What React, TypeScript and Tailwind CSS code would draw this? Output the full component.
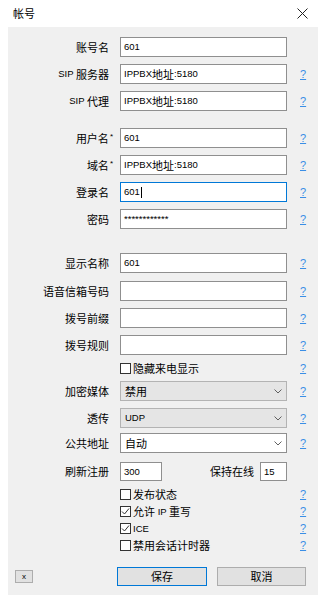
import React from "react";

const CJK = /[\u3000-\u9fff\uff00-\uffef]/;

function T({ s }: { s: string }) {
  const parts: { t: string; c: boolean }[] = [];
  for (const ch of s) {
    const c = CJK.test(ch);
    const last = parts[parts.length - 1];
    if (last && last.c === c) last.t += ch;
    else parts.push({ t: ch, c });
  }
  return (
    <span className="inline-flex items-center leading-none">
      {parts.map((p, i) => (
        <span
          key={i}
          className={
            p.c
              ? "whitespace-pre leading-none text-[11px] font-['Noto_Sans_CJK_SC',sans-serif]"
              : "whitespace-pre leading-none text-[9.5px] font-['Liberation_Sans',sans-serif]"
          }
        >
          {p.t}
        </span>
      ))}
    </span>
  );
}

function Help() {
  return (
    <span className="ml-[13px] text-[11px] leading-none text-[#3a8ee6] underline font-['Liberation_Sans',sans-serif]">
      ?
    </span>
  );
}

function Label({ s, star }: { s: string; star?: boolean }) {
  return (
    <div className="w-[101px] flex justify-end items-center text-[#000] leading-none">
      <T s={s} />
      {star && <span className="mr-[-4px] ml-[1px] self-start text-[8px] leading-none font-['Liberation_Sans',sans-serif]">*</span>}
    </div>
  );
}

function Row({
  label,
  star,
  value,
  help = true,
  focused,
  mt,
}: {
  label: string;
  star?: boolean;
  value?: string;
  help?: boolean;
  focused?: boolean;
  mt: string;
}) {
  return (
    <div className={`flex items-center h-[20px] ${mt}`}>
      <Label s={label} star={star} />
      <div
        className={`ml-[11px] w-[167px] h-[20px] bg-white border flex items-center px-[3px] leading-none ${
          focused ? "border-[#0078d7]" : "border-[#8f8f8f]"
        }`}
      >
        {value && <T s={value} />}
        {focused && <span className="ml-[1px] w-[1px] h-[11px] bg-black" />}
      </div>
      {help && <Help />}
    </div>
  );
}

function Chevron() {
  return (
    <svg width="8" height="5" viewBox="0 0 8 5" className="ml-auto mr-[4px]">
      <polyline points="0.5,0.5 4,4 7.5,0.5" fill="none" stroke="#606060" strokeWidth="1" />
    </svg>
  );
}

function SelectRow({ label, value, white, mt }: { label: string; value: string; white?: boolean; mt: string }) {
  return (
    <div className={`flex items-center h-[20px] ${mt}`}>
      <Label s={label} />
      <div
        className={`ml-[11px] w-[167px] h-[20px] border flex items-center pl-[4px] leading-none ${
          white ? "bg-white border-[#8f8f8f]" : "bg-[#e5e5e5] border-[#b3b3b3]"
        }`}
      >
        <T s={value} />
        <Chevron />
      </div>
      <Help />
    </div>
  );
}

function Box({ checked }: { checked?: boolean }) {
  return (
    <span className="w-[11px] h-[11px] border border-[#333] bg-white flex items-center justify-center shrink-0">
      {checked && (
        <svg width="9" height="9" viewBox="0 0 9 9">
          <polyline points="1,4.5 3.5,7 8,1.5" fill="none" stroke="#333" strokeWidth="1" />
        </svg>
      )}
    </span>
  );
}

function CheckRow({ label, checked, mt, h }: { label: string; checked?: boolean; mt: string; h: string }) {
  return (
    <div className={`flex items-center ${h} ${mt}`}>
      <div className="w-[101px]" />
      <div className="ml-[11px] w-[167px] flex items-center leading-none">
        <Box checked={checked} />
        <span className="ml-[2px] flex items-center">
          <T s={label} />
        </span>
      </div>
      <Help />
    </div>
  );
}

export default function App() {
  return (
    <div className="w-[325px] h-[600px] bg-white flex flex-col text-black overflow-hidden">
      <div className="h-[27px] flex items-center pl-[13px] pr-[17px] shrink-0">
        <T s="帐号" />
        <svg width="11" height="11" viewBox="0 0 11 11" className="ml-auto">
          <line x1="0.5" y1="0.5" x2="10.5" y2="10.5" stroke="#222" strokeWidth="1" />
          <line x1="10.5" y1="0.5" x2="0.5" y2="10.5" stroke="#222" strokeWidth="1" />
        </svg>
      </div>
      <div className="ml-[8px] w-[310px] h-[568px] bg-[#f0f0f0] flex flex-col">
        <Row label="账号名" value="601" help={false} mt="mt-[10px]" />
        <Row label="SIP 服务器" value="IPPBX地址:5180" mt="mt-[7px]" />
        <Row label="SIP 代理" value="IPPBX地址:5180" mt="mt-[7px]" />

        <Row label="用户名" star value="601" mt="mt-[17px]" />
        <Row label="域名" star value="IPPBX地址:5180" mt="mt-[7px]" />
        <Row label="登录名" value="601" focused mt="mt-[7px]" />
        <Row label="密码" value="************" mt="mt-[7px]" />

        <Row label="显示名称" value="601" mt="mt-[24px]" />
        <Row label="语音信箱号码" mt="mt-[8px]" />
        <Row label="拨号前缀" mt="mt-[7px]" />
        <Row label="拨号规则" mt="mt-[7px]" />

        <CheckRow label="隐藏来电显示" mt="mt-[6px]" h="h-[14px]" />

        <SelectRow label="加密媒体" value="禁用" mt="mt-[6px]" />
        <SelectRow label="透传" value="UDP" mt="mt-[7px]" />
        <SelectRow label="公共地址" value="自动" white mt="mt-[5px]" />

        <div className="flex items-center h-[19px] mt-[9px]">
          <Label s="刷新注册" />
          <div className="ml-[11px] w-[42px] h-[19px] bg-white border border-[#8f8f8f] flex items-center px-[3px] leading-none">
            <T s="300" />
          </div>
          <div className="ml-[48px] leading-none flex items-center">
            <T s="保持在线" />
          </div>
          <div className="ml-[6px] w-[27px] h-[19px] bg-white border border-[#8f8f8f] flex items-center px-[3px] leading-none">
            <T s="15" />
          </div>
        </div>

        <CheckRow label="发布状态" mt="mt-[5px]" h="h-[17px]" />
        <CheckRow label="允许 IP 重写" checked mt="mt-0" h="h-[17px]" />
        <CheckRow label="ICE" checked mt="mt-0" h="h-[17px]" />
        <CheckRow label="禁用会话计时器" mt="mt-0" h="h-[17px]" />

        <div className="flex items-center mt-[13px] h-[19px]">
          <div className="ml-[7px] w-[18px] h-[13px] bg-[#e1e1e1] border border-[#adadad] flex items-center justify-center leading-none">
            <span className="text-[8px] font-['Liberation_Sans',sans-serif]">x</span>
          </div>
          <div className="ml-[84px] w-[90px] h-[19px] bg-[#e1e1e1] border border-[#0078d7] flex items-center justify-center leading-none">
            <T s="保存" />
          </div>
          <div className="ml-[10px] w-[89px] h-[19px] bg-[#e1e1e1] border border-[#adadad] flex items-center justify-center leading-none">
            <T s="取消" />
          </div>
        </div>
      </div>
    </div>
  );
}
